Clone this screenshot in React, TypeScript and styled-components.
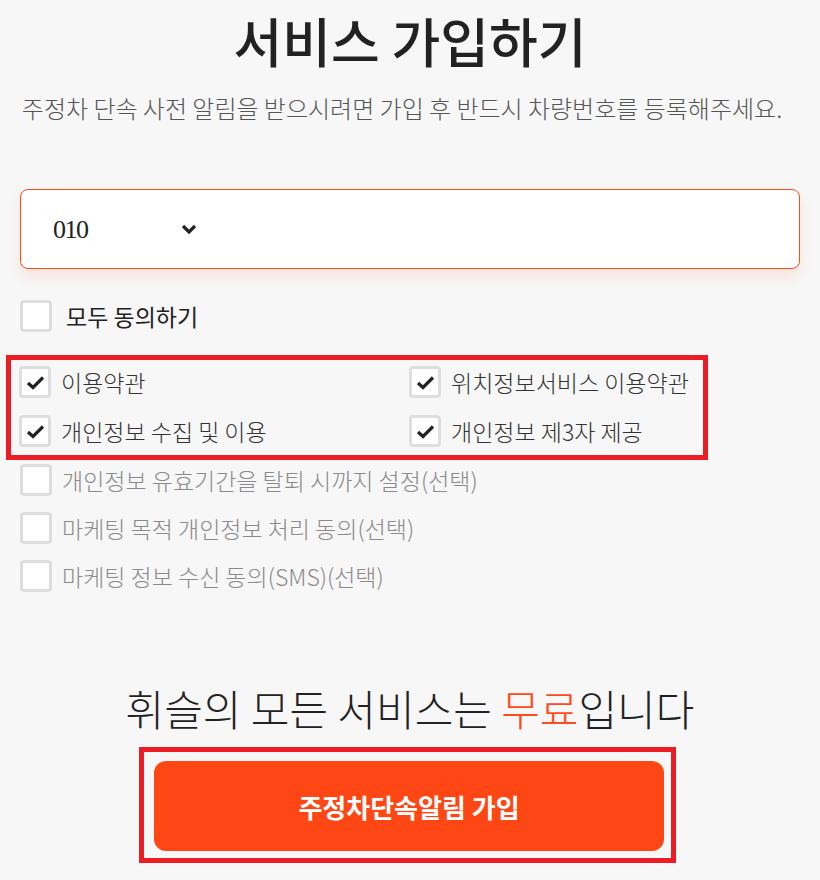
import React from "react";
import styled, { createGlobalStyle } from "styled-components";

const Global = createGlobalStyle`
  html, body { margin: 0; padding: 0; background: #f7f7f7; }
  body { font-family: "Noto Sans CJK KR", "Noto Sans", sans-serif; color: #222; }
`;

const Page = styled.div`
  width: 820px;
  padding: 0 20px;
  box-sizing: border-box;
  display: flex;
  flex-direction: column;
`;

const Title = styled.h1`
  margin: 0;
  text-align: center;
  font-size: 53px;
  line-height: 80px;
  font-weight: 500;
  color: #222;
`;

const Subtitle = styled.p`
  margin: 12px 0 0;
  padding-right: 16px;
  text-align: center;
  font-size: 24px;
  line-height: 32px;
  font-weight: 300;
  color: #555;
`;

const PhoneBox = styled.div`
  margin-top: 65px;
  height: 80px;
  box-sizing: border-box;
  background: #fff;
  border: 1px solid #ff4b14;
  border-radius: 8px;
  box-shadow: 0 8px 14px rgba(255, 90, 40, 0.12);
  display: flex;
  align-items: center;
  padding-left: 32px;
  gap: 93px;
`;

const Prefix = styled.span`
  font-family: "Liberation Serif", serif;
  font-size: 26px;
  color: #222;
  letter-spacing: -1.5px;
  margin-top: 2px;
`;

const Chevron = () => (
  <svg width="16" height="11" viewBox="0 0 16 11">
    <polyline points="2,2 8,8 14,2" fill="none" stroke="#222" strokeWidth="3.2" />
  </svg>
);

const Row = styled.label<{ $muted?: boolean; $bold?: boolean }>`
  display: flex;
  align-items: center;
  gap: 10px;
  height: 32px;
  font-size: 23px;
  font-weight: ${(p) => (p.$bold ? 400 : 300)};
  color: ${(p) => (p.$muted ? "#8a8a8a" : "#333")};
  white-space: nowrap;
`;

const Box = styled.span`
  width: 32px;
  height: 32px;
  box-sizing: border-box;
  border: 3px solid #dedede;
  border-radius: 4px;
  background: #fff;
  display: flex;
  align-items: center;
  justify-content: center;
  flex: none;
`;

const AllRow = styled(Row)`
  margin-top: 31px;
  gap: 14px;
  color: #222;
`;

const Highlight = styled.div`
  margin: 23px 0 0 -14px;
  align-self: flex-start;
  border: 5px solid #ec1c24;
  padding: 6px 14px 8px 8px;
  display: grid;
  grid-template-columns: 390px auto;
  row-gap: 17px;
`;

const Optional = styled.div`
  margin-top: 4px;
  display: flex;
  flex-direction: column;
  gap: 16px;
`;

const Free = styled.p`
  margin: 89px 0 0;
  text-align: center;
  font-size: 42px;
  line-height: 54px;
  font-weight: 300;
  color: #222;
`;

const Accent = styled.span`
  color: #ff4b1a;
`;

const ButtonFrame = styled.div`
  margin: 12px 0 0 119px;
  align-self: flex-start;
  border: 5px solid #ec1c24;
  padding: 9px 7px 7px 10px;
`;

const Submit = styled.button`
  width: 510px;
  height: 90px;
  border: 0;
  border-radius: 12px;
  background: #ff4715;
  color: #fff;
  font-family: "Noto Sans CJK KR", sans-serif;
  font-size: 26px;
  font-weight: 700;
  display: block;
  padding: 0;
`;

const Check = () => (
  <svg width="19" height="15" viewBox="0 0 19 15">
    <polyline points="2,8 7,12.5 17,2.5" fill="none" stroke="#222" strokeWidth="3.2" />
  </svg>
);

const CheckItem = ({ label, checked, muted }: { label: string; checked?: boolean; muted?: boolean }) => (
  <Row $muted={muted}>
    <Box>{checked && <Check />}</Box>
    {label}
  </Row>
);

export default function App() {
  return (
    <>
      <Global />
      <Page>
        <Title>서비스 가입하기</Title>
        <Subtitle>주정차 단속 사전 알림을 받으시려면 가입 후 반드시 차량번호를 등록해주세요.</Subtitle>
        <PhoneBox>
          <Prefix>010</Prefix>
          <Chevron />
        </PhoneBox>
        <AllRow $bold>
          <Box />
          모두 동의하기
        </AllRow>
        <Highlight>
          <CheckItem label="이용약관" checked />
          <CheckItem label="위치정보서비스 이용약관" checked />
          <CheckItem label="개인정보 수집 및 이용" checked />
          <CheckItem label="개인정보 제3자 제공" checked />
        </Highlight>
        <Optional>
          <CheckItem label="개인정보 유효기간을 탈퇴 시까지 설정(선택)" muted />
          <CheckItem label="마케팅 목적 개인정보 처리 동의(선택)" muted />
          <CheckItem label="마케팅 정보 수신 동의(SMS)(선택)" muted />
        </Optional>
        <Free>
          휘슬의 모든 서비스는 <Accent>무료</Accent>입니다
        </Free>
        <ButtonFrame>
          <Submit>주정차단속알림 가입</Submit>
        </ButtonFrame>
      </Page>
    </>
  );
}
